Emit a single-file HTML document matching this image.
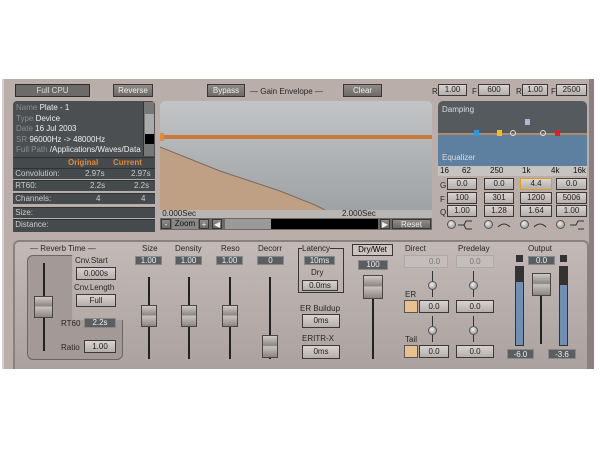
<!DOCTYPE html>
<html><head><meta charset="utf-8"><style>
*{margin:0;padding:0;box-sizing:border-box}
body{width:600px;height:450px;background:#fff;position:relative;overflow:hidden;font-family:"Liberation Sans",sans-serif;}
.a{position:absolute}
.plug{left:2px;top:79px;width:592px;height:290px;background:#b9aeaa;border-left:2px solid #d8d0cd;border-right:5px solid #8a807d;}
.t{position:absolute;font-size:8px;color:#2a2626;white-space:nowrap;line-height:1}
.btn{position:absolute;background:linear-gradient(#8f8b89,#6d6967);border:1px solid #3a3634;color:#eee;font-size:8px;text-align:center;line-height:11px}
.bx{position:absolute;background:linear-gradient(#d8d2d0,#b4aeac);border:1px solid #3d3837;font-size:8px;color:#222;text-align:center}
.dv{position:absolute;background:#5a5e60;border:1px solid #888;color:#eee;font-size:8px;text-align:center;line-height:8px}
.row{position:absolute;left:13px;width:142px;height:11px;background:#454a4c;border-top:1px solid #2f3333;font-size:8px;color:#ccc;line-height:10px}
.trk{position:absolute;width:2px;background:#222}
.th{position:absolute;background:linear-gradient(#cfc9c7,#8b8583 45%,#c7c1bf 50%,#8b8583);border:1px solid #4a4543}
.knob{position:absolute;width:9px;height:9px;border-radius:50%;background:radial-gradient(circle at 40% 35%,#eee,#888);border:1px solid #555}
.led{position:absolute;width:14px;height:13px;background:#e9c08e;border:1px solid #555}
</style></head><body>
<div class="a plug"></div>
<div class="a" style="left:15px;top:84px;width:75px;height:13px;background:#6d6b6a;border:1px solid #2f2c2b;color:#ddd;font-size:8px;text-align:center;line-height:11px">Full CPU</div>
<div class="btn" style="left:113px;top:84px;width:40px;height:13px">Reverse</div>
<div class="btn" style="left:207px;top:84px;width:38px;height:13px">Bypass</div>
<div class="t" style="left:250px;top:88px">— Gain Envelope —</div>
<div class="btn" style="left:343px;top:84px;width:39px;height:13px">Clear</div>
<div class="t" style="left:432px;top:88px">R</div><div class="bx" style="left:438px;top:84px;width:29px;height:12px;line-height:10px">1.00</div>
<div class="t" style="left:472px;top:88px">F</div><div class="bx" style="left:478px;top:84px;width:32px;height:12px;line-height:10px">600</div>
<div class="t" style="left:516px;top:88px">R</div><div class="bx" style="left:522px;top:84px;width:26px;height:12px;line-height:10px">1.00</div>
<div class="t" style="left:551px;top:88px">F</div><div class="bx" style="left:556px;top:84px;width:31px;height:12px;line-height:10px">2500</div>
<div class="a" style="left:13px;top:101px;width:142px;height:56px;background:#4b4f51;border-radius:4px 4px 0 0;font-size:8px;color:#eee;line-height:10.5px;padding:2px 0 0 3px">
<span style="color:#8a8e90">Name</span> Plate - 1<br><span style="color:#8a8e90">Type</span> Device<br><span style="color:#8a8e90">Date</span> 16 Jul 2003<br><span style="color:#8a8e90">SR</span> 96000Hz -&gt; 48000Hz<br><span style="color:#8a8e90">Full Path</span> /Applications/Waves/Data</div>
<div class="a" style="left:143px;top:102px;width:11px;height:54px;background:#777;border-left:1px solid #333"><div class="a" style="left:1px;top:12px;width:9px;height:20px;background:#aaa"></div><div class="a" style="left:1px;top:32px;width:9px;height:10px;background:#000"></div></div>
<div class="row" style="top:157px;color:#e08a3a;font-weight:bold"><span class="a" style="left:55px">Original</span><span class="a" style="left:100px">Current</span></div>
<div class="row" style="top:168px">&nbsp;Convolution:<span class="a" style="left:72px">2.97s</span><span class="a" style="left:118px">2.97s</span></div>
<div class="row" style="top:180px">&nbsp;RT60:<span class="a" style="left:77px">2.2s</span><span class="a" style="left:121px">2.2s</span></div>
<div class="row" style="top:193px">&nbsp;Channels:<span class="a" style="left:83px">4</span><span class="a" style="left:128px">4</span></div>
<div class="row" style="top:207px">&nbsp;Size:</div>
<div class="row" style="top:219px;height:13px">&nbsp;Distance:</div>
<div class="a" style="left:160px;top:101px;width:272px;height:109px;background:linear-gradient(#c2c4c6,#9ea2a4);border-radius:5px 5px 0 0;overflow:hidden">
<svg width="272" height="109" style="position:absolute;left:0;top:0"><polygon points="0,46 30,58 60,70 90,80 120,90 140,98 155,104 165,109 0,109" fill="#c0a084"/><polyline points="0,46 30,58 60,70 90,80 120,90 140,98 155,104 165,109" fill="none" stroke="#7a6c62" stroke-width="1"/><rect x="0" y="34" width="272" height="4" fill="#c77a3a"/><rect x="0" y="32" width="4" height="8" fill="#e08a3a"/></svg></div>
<div class="a" style="left:160px;top:210px;width:272px;height:8px;background:#b9b5b3;font-size:8px;color:#222;line-height:8px">&nbsp;0.000Sec<span class="a" style="left:182px">2.000Sec</span></div>
<div class="a" style="left:160px;top:218px;width:272px;height:12px;background:#6b6866"></div>
<div class="btn" style="left:161px;top:219px;width:10px;height:10px;line-height:9px">-</div>
<div class="a" style="left:172px;top:219px;width:26px;height:10px;background:#888;color:#111;font-size:8px;line-height:10px;text-align:center">Zoom</div>
<div class="btn" style="left:199px;top:219px;width:10px;height:10px;line-height:9px">+</div>
<div class="btn" style="left:212px;top:219px;width:10px;height:10px;line-height:9px">◀</div>
<div class="a" style="left:225px;top:219px;width:46px;height:10px;background:#9a9a9a"></div>
<div class="a" style="left:271px;top:219px;width:107px;height:10px;background:#000"></div>
<div class="btn" style="left:380px;top:219px;width:10px;height:10px;line-height:9px">▶</div>
<div class="btn" style="left:392px;top:219px;width:39px;height:10px;line-height:9px">Reset</div>
<div class="a" style="left:438px;top:101px;width:149px;height:33px;background:#545a5e;border-radius:5px 5px 0 0"></div>
<div class="a" style="left:438px;top:134px;width:149px;height:32px;background:#5d7fa0"></div>
<div class="a" style="left:438px;top:133px;width:149px;height:2px;background:#b08a6a"></div>
<div class="t" style="left:442px;top:106px;color:#ddd">Damping</div>
<div class="t" style="left:442px;top:154px;color:#ddd">Equalizer</div>
<div class="a" style="left:474px;top:130px;width:5px;height:6px;background:#2a9ae0"></div>
<div class="a" style="left:497px;top:130px;width:5px;height:6px;background:#f0c020"></div>
<div class="a" style="left:510px;top:130px;width:6px;height:6px;border:1px solid #ddd;border-radius:50%"></div>
<div class="a" style="left:525px;top:119px;width:5px;height:6px;background:#a8b8e0"></div>
<div class="a" style="left:540px;top:130px;width:6px;height:6px;border:1px solid #ddd;border-radius:50%"></div>
<div class="a" style="left:555px;top:130px;width:5px;height:6px;background:#e02020"></div>
<div class="a" style="left:438px;top:166px;width:149px;height:10px;background:#c8c2c0;font-size:8px;line-height:10px;color:#111"><span class="a" style="left:2px">16</span><span class="a" style="left:24px">62</span><span class="a" style="left:52px">250</span><span class="a" style="left:84px">1k</span><span class="a" style="left:113px">4k</span><span class="a" style="left:135px">16k</span></div>
<div class="t" style="left:440px;top:182px">G</div><div class="t" style="left:440px;top:196px">F</div><div class="t" style="left:440px;top:209px">Q</div>
<div class="bx" style="left:447px;top:178px;width:30px;height:12px;line-height:10px">0.0</div>
<div class="bx" style="left:484px;top:178px;width:30px;height:12px;line-height:10px">0.0</div>
<div class="bx" style="left:520px;top:178px;width:32px;height:12px;line-height:10px;border-color:#d8a020">4.4</div>
<div class="bx" style="left:556px;top:178px;width:31px;height:12px;line-height:10px">0.0</div>
<div class="bx" style="left:447px;top:192px;width:30px;height:12px;line-height:10px">100</div>
<div class="bx" style="left:484px;top:192px;width:30px;height:12px;line-height:10px">301</div>
<div class="bx" style="left:520px;top:192px;width:32px;height:12px;line-height:10px">1200</div>
<div class="bx" style="left:556px;top:192px;width:31px;height:12px;line-height:10px">5006</div>
<div class="bx" style="left:447px;top:205px;width:30px;height:12px;line-height:10px">1.00</div>
<div class="bx" style="left:484px;top:205px;width:30px;height:12px;line-height:10px">1.28</div>
<div class="bx" style="left:520px;top:205px;width:32px;height:12px;line-height:10px">1.64</div>
<div class="bx" style="left:556px;top:205px;width:31px;height:12px;line-height:10px">1.00</div>
<div class="knob" style="left:447px;top:220px"></div><div class="knob" style="left:484px;top:220px"></div><div class="knob" style="left:520px;top:220px"></div><div class="knob" style="left:556px;top:220px"></div>
<svg class="a" style="left:456px;top:219px" width="132" height="12" fill="none" stroke="#333" stroke-width="1"><path d="M2,6 H8 L10,2 H16 M10,10 H16 M8,6 L10,10"/><path d="M42,8 Q48,2 54,8"/><path d="M78,8 Q84,2 90,8"/><path d="M114,6 H120 L122,2 H128 M122,10 H128"/></svg>
<div class="a" style="left:13px;top:240px;width:576px;height:129px;border:2px solid #8a807d;border-bottom:none;border-radius:6px 6px 0 0;background:linear-gradient(#c3b9b6,#aba19e)"></div>
<div class="a" style="left:27px;top:255px;width:96px;height:105px;background:#a39a97;border:1px solid #6e6461;border-radius:6px;clip-path:polygon(0 0,47% 0,47% 62%,100% 62%,100% 100%,0 100%)"></div>
<div class="t" style="left:30px;top:245px">— Reverb Time —</div>
<div class="trk" style="left:43px;top:263px;height:88px"></div>
<div class="th" style="left:34px;top:296px;width:19px;height:22px"></div>
<div class="t" style="left:75px;top:257px">Cnv.Start</div>
<div class="bx" style="left:76px;top:267px;width:40px;height:13px;line-height:11px">0.000s</div>
<div class="t" style="left:74px;top:284px">Cnv.Length</div>
<div class="bx" style="left:76px;top:294px;width:40px;height:13px;line-height:11px">Full</div>
<div class="t" style="left:61px;top:320px">RT60</div>
<div class="dv" style="left:84px;top:318px;width:32px;height:10px">2.2s</div>
<div class="t" style="left:61px;top:344px">Ratio</div>
<div class="bx" style="left:84px;top:340px;width:32px;height:13px;line-height:11px">1.00</div>
<div class="t" style="left:142px;top:245px">Size</div><div class="dv" style="left:135px;top:256px;width:27px;height:9px">1.00</div>
<div class="trk" style="left:148px;top:277px;height:82px"></div><div class="th" style="left:141px;top:305px;width:16px;height:22px"></div>
<div class="t" style="left:175px;top:245px">Density</div><div class="dv" style="left:175px;top:256px;width:27px;height:9px">1.00</div>
<div class="trk" style="left:188px;top:277px;height:82px"></div><div class="th" style="left:181px;top:305px;width:16px;height:22px"></div>
<div class="t" style="left:221px;top:245px">Reso</div><div class="dv" style="left:216px;top:256px;width:27px;height:9px">1.00</div>
<div class="trk" style="left:229px;top:277px;height:82px"></div><div class="th" style="left:222px;top:305px;width:16px;height:22px"></div>
<div class="t" style="left:258px;top:245px">Decorr</div><div class="dv" style="left:257px;top:256px;width:27px;height:9px">0</div>
<div class="trk" style="left:269px;top:277px;height:82px"></div><div class="th" style="left:262px;top:335px;width:16px;height:23px"></div>
<div class="a" style="left:298px;top:248px;width:46px;height:45px;border:1px solid #3a3634"></div>
<div class="t" style="left:302px;top:245px;background:#bdb4b1">Latency</div>
<div class="dv" style="left:304px;top:256px;width:31px;height:9px">10ms</div>
<div class="t" style="left:311px;top:269px">Dry</div>
<div class="bx" style="left:302px;top:280px;width:36px;height:11px;line-height:9px">0.0ms</div>
<div class="t" style="left:300px;top:305px">ER Buildup</div>
<div class="bx" style="left:302px;top:314px;width:38px;height:14px;line-height:12px">0ms</div>
<div class="t" style="left:302px;top:335px">ERITR-X</div>
<div class="bx" style="left:302px;top:345px;width:38px;height:14px;line-height:12px">0ms</div>
<div class="a" style="left:352px;top:244px;width:41px;height:12px;border:1px solid #3a3634;background:#cbc3c0;font-size:8px;text-align:center;line-height:10px">Dry/Wet</div>
<div class="dv" style="left:358px;top:260px;width:30px;height:10px">100</div>
<div class="trk" style="left:372px;top:290px;height:69px"></div>
<div class="th" style="left:363px;top:275px;width:20px;height:24px"></div>
<div class="t" style="left:405px;top:245px">Direct</div>
<div class="t" style="left:458px;top:245px">Predelay</div>
<div class="a" style="left:404px;top:255px;width:44px;height:13px;background:#c5bdbb;border:1px solid #aaa;color:#777;font-size:8px;line-height:11px;padding-left:24px">0.0</div>
<div class="a" style="left:456px;top:255px;width:38px;height:13px;background:#c5bdbb;border:1px solid #aaa;color:#777;font-size:8px;line-height:11px;text-align:center">0.0</div>
<div class="trk" style="left:432px;top:271px;height:26px;width:1px;background:#333"></div><div class="trk" style="left:473px;top:271px;height:26px;width:1px;background:#333"></div>
<div class="knob" style="left:428px;top:281px"></div><div class="knob" style="left:469px;top:281px"></div>
<div class="t" style="left:405px;top:291px">ER</div>
<div class="led" style="left:404px;top:300px"></div><div class="bx" style="left:419px;top:300px;width:30px;height:13px;line-height:11px">0.0</div>
<div class="bx" style="left:456px;top:300px;width:38px;height:13px;line-height:11px">0.0</div>
<div class="trk" style="left:432px;top:316px;height:26px;width:1px;background:#333"></div><div class="trk" style="left:473px;top:316px;height:26px;width:1px;background:#333"></div>
<div class="knob" style="left:428px;top:326px"></div><div class="knob" style="left:469px;top:326px"></div>
<div class="t" style="left:405px;top:336px">Tail</div>
<div class="led" style="left:404px;top:345px"></div><div class="bx" style="left:419px;top:345px;width:30px;height:13px;line-height:11px">0.0</div>
<div class="bx" style="left:456px;top:345px;width:38px;height:13px;line-height:11px">0.0</div>
<div class="t" style="left:528px;top:245px">Output</div>
<div class="dv" style="left:528px;top:256px;width:27px;height:9px">0.0</div>
<div class="a" style="left:516px;top:255px;width:7px;height:7px;background:#333"></div>
<div class="a" style="left:560px;top:255px;width:7px;height:7px;background:#333"></div>
<div class="a" style="left:515px;top:266px;width:9px;height:80px;background:#6f8fb5;border:1px solid #333;border-top:16px solid #333"></div>
<div class="a" style="left:559px;top:266px;width:9px;height:80px;background:#6f8fb5;border:1px solid #333;border-top:19px solid #333"></div>
<div class="trk" style="left:540px;top:290px;height:54px"></div>
<div class="th" style="left:532px;top:273px;width:19px;height:23px"></div>
<div class="dv" style="left:507px;top:349px;width:27px;height:10px;line-height:9px">-6.0</div>
<div class="dv" style="left:548px;top:349px;width:28px;height:10px;line-height:9px">-3.6</div>
</body></html>
